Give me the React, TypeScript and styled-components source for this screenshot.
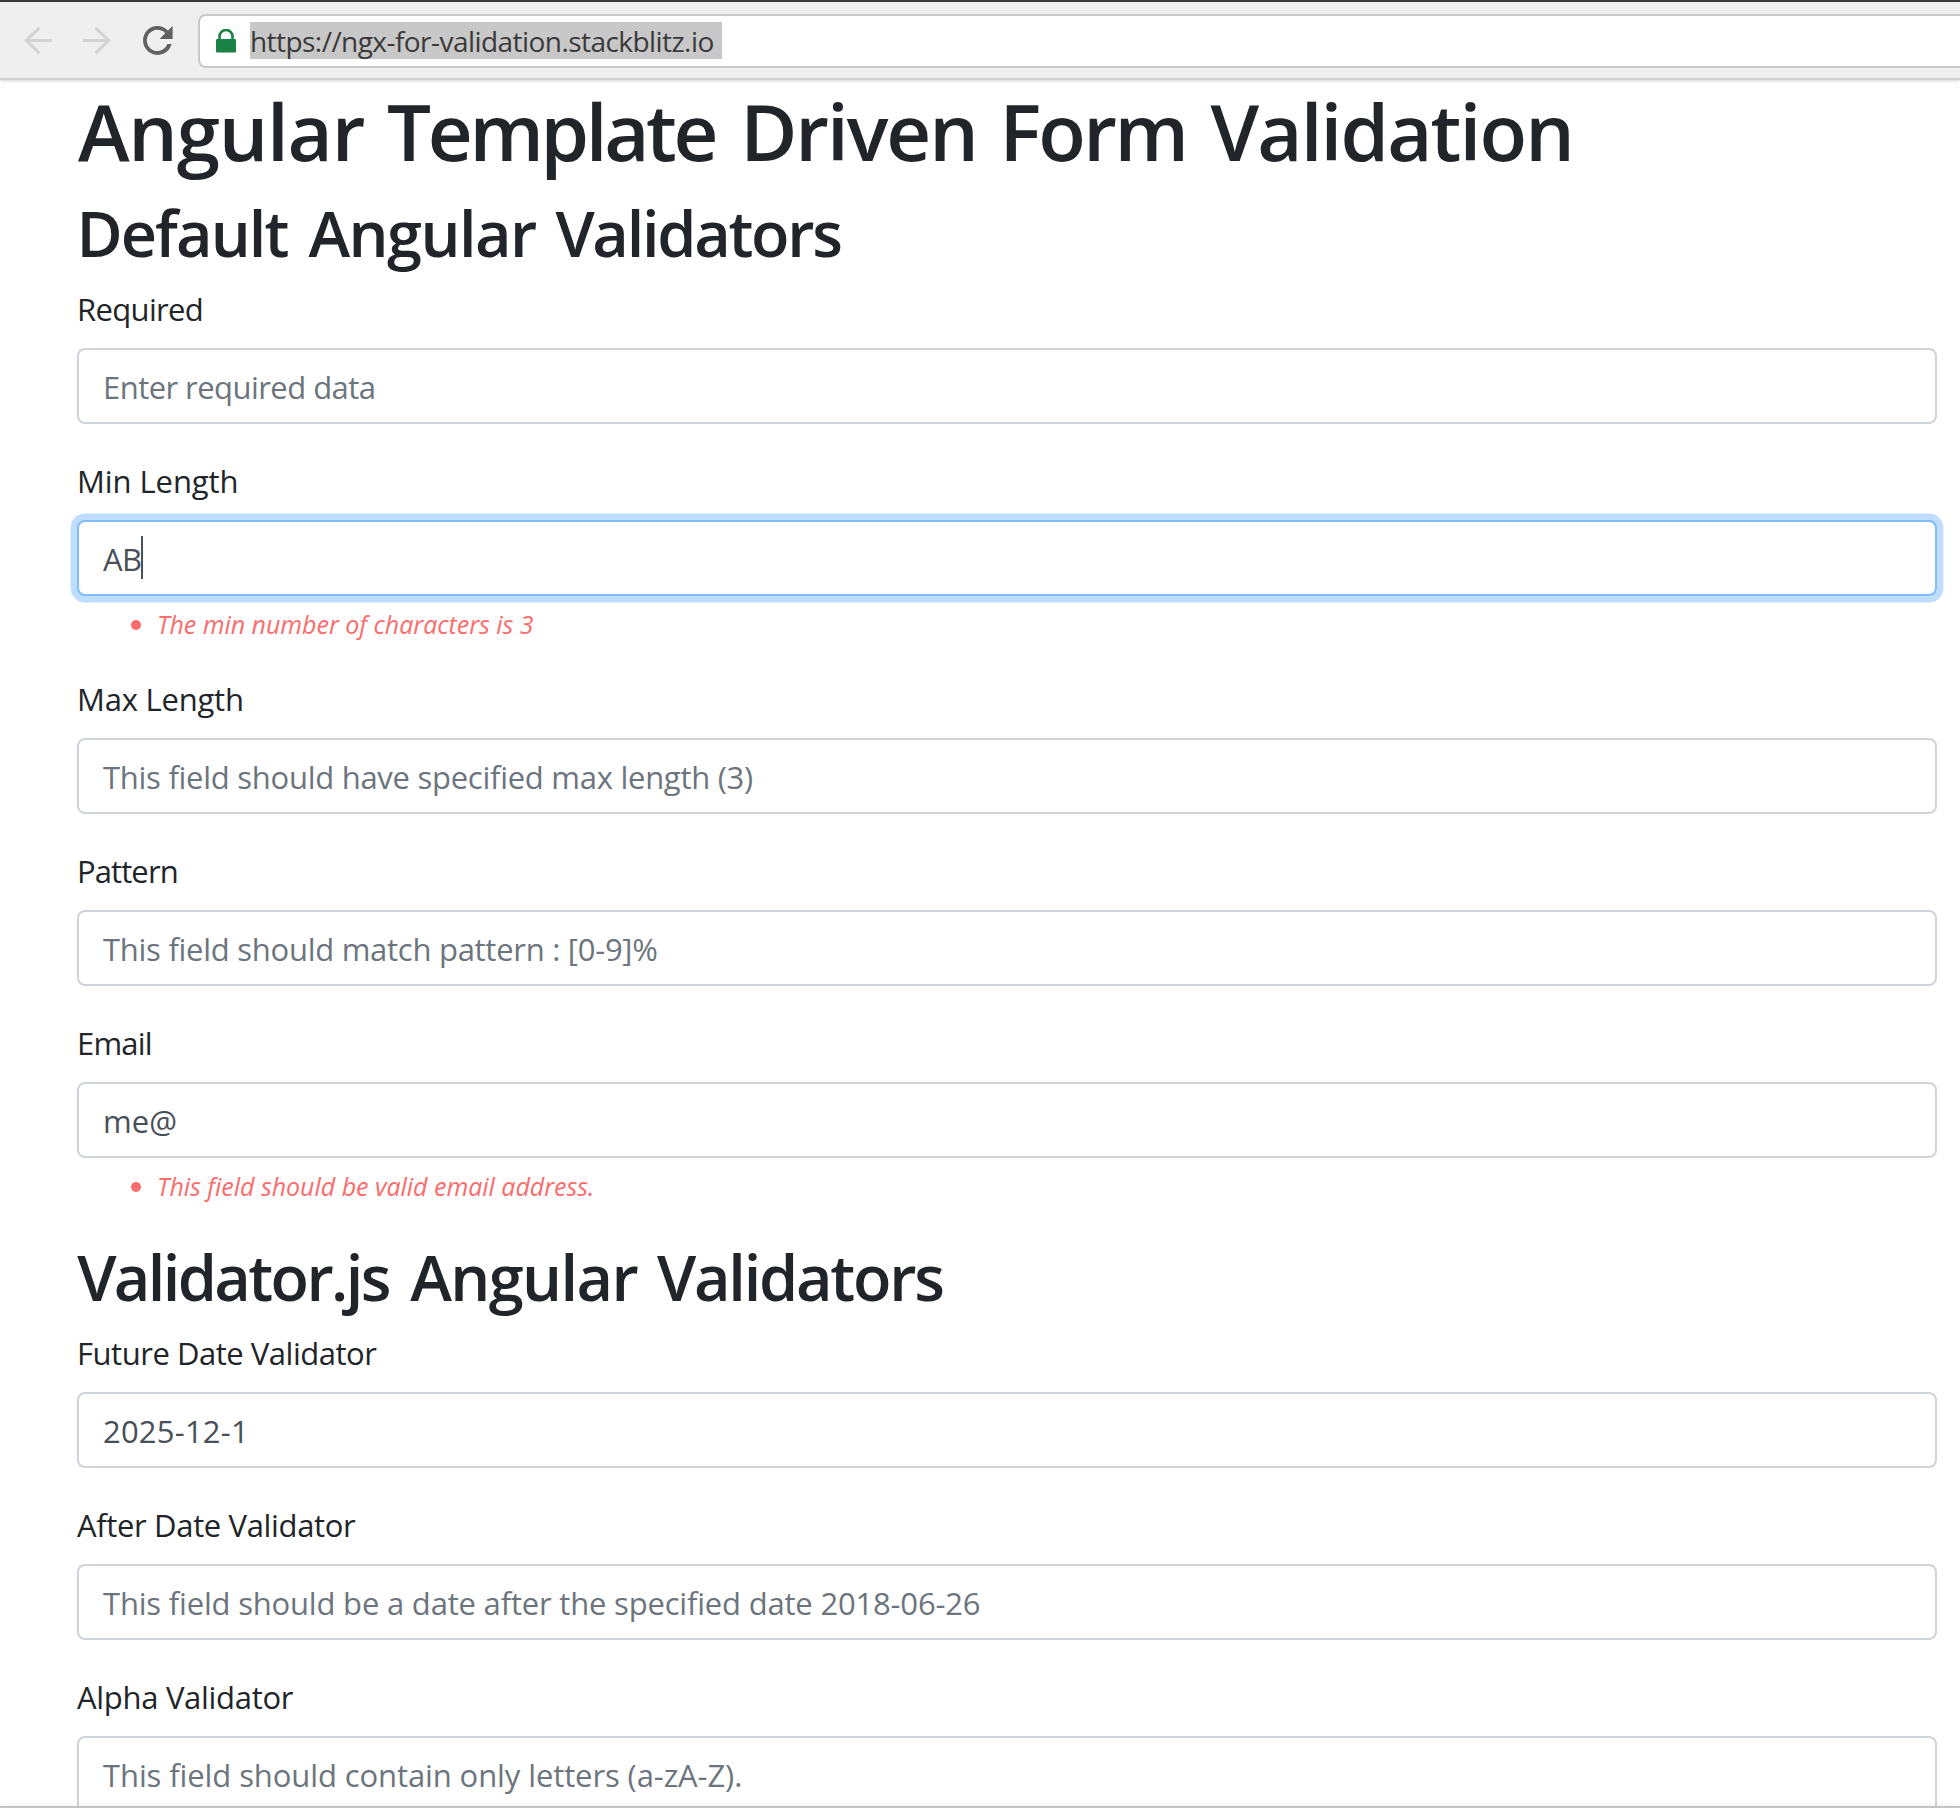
import React, { Fragment } from "react";
import styled, { createGlobalStyle } from "styled-components";

const GlobalStyle = createGlobalStyle`
  *, *::before, *::after { box-sizing: border-box; }
  html, body { margin: 0; background: #fff; overflow: hidden; }
  body { font-family: "Open Sans", "Noto Sans", sans-serif; color: #212529; }
`;

const Window = styled.div`
  display: flex;
  flex-direction: column;
  height: 1808px;
  overflow: hidden;
  background: #fff;
`;

const Toolbar = styled.header`
  position: relative;
  z-index: 1;
  flex: none;
  display: flex;
  align-items: center;
  height: 80px;
  padding: 0 0 0 20px;
  background: #efefef;
  border-top: 2px solid #3b3b3b;
  border-bottom: 2px solid #cfcfcf;
  box-shadow: 0 1px 3px rgba(0, 0, 0, 0.16);
`;

const ToolIcon = styled.svg<{ $gap: number }>`
  flex: none;
  display: block;
  margin-right: ${(p) => p.$gap}px;
`;

const AddressBar = styled.div`
  flex: 1;
  display: flex;
  align-items: center;
  height: 54px;
  padding-left: 16px;
  margin-top: 2px;
  background: #fff;
  border: 2px solid #c9c9c9;
  border-right: 0;
  border-radius: 8px 0 0 8px;
`;

const Url = styled.span`
  width: 472px;
  height: 37px;
  margin-top: -1px;
  background: #c8c8c8;
  color: #3a3a3a;
  font-size: 28px;
  line-height: 38px;
  letter-spacing: -0.55px;
  white-space: nowrap;
`;

const Page = styled.main`
  flex: 1;
  min-height: 0;
  overflow: hidden;
  padding: 0 23px 0 77px;
`;

const Title = styled.h1`
  height: 96px;
  margin: 0 0 16px;
  font-size: 78px;
  font-weight: 600;
  line-height: 103px;
  white-space: nowrap;
`;

const SectionTitle = styled.h2`
  height: 76px;
  margin: 0 0 16px;
  font-size: 63px;
  font-weight: 600;
  line-height: 81px;
  white-space: nowrap;
`;

const Word = styled.span<{ $tracking: number; $lead: number }>`
  margin-left: ${(p) => p.$lead}px;
  letter-spacing: ${(p) => p.$tracking}px;
`;

const Group = styled.div`
  margin-bottom: 32px;
`;

const Label = styled.label<{ $tracking: number }>`
  display: block;
  height: 48px;
  margin-bottom: 16px;
  font-size: 31px;
  line-height: 50px;
  letter-spacing: ${(p) => p.$tracking}px;
`;

const Control = styled.div<{ $focused?: boolean; $filled?: boolean; $tracking: number }>`
  display: flex;
  height: 76px;
  padding: 0 24px;
  background: #fff;
  border: 2px solid ${(p) => (p.$focused ? "#80bdff" : "#ced4da")};
  border-radius: 8px;
  box-shadow: ${(p) => (p.$focused ? "0 0 0 6.4px #bfdeff" : "none")};
  color: ${(p) => (p.$filled ? "#495057" : "#6c757d")};
  font-size: 31px;
  line-height: 74px;
  letter-spacing: ${(p) => p.$tracking}px;
  white-space: nowrap;
`;

const Caret = styled.span`
  width: 2px;
  height: 43px;
  margin-top: 14px;
  background: #495057;
`;

const Errors = styled.ul`
  height: 46px;
  margin: 0;
  padding: 9px 0 0 80px;
  list-style: none;
  color: #fb6c6c;
  font-size: 25px;
  font-style: italic;
  line-height: 39px;
  letter-spacing: -0.03px;
`;

const ErrorItem = styled.li`
  display: flex;
  align-items: center;
  &::before {
    content: "";
    width: 10px;
    height: 10px;
    margin: 0 16px 0 -26px;
    border-radius: 50%;
    background: #fb6c6c;
  }
`;

const BottomEdge = styled.footer`
  position: relative;
  flex: none;
  height: 2px;
  background: #c4c4c4;
  box-shadow: 0 -1px 4px rgba(0, 0, 0, 0.1);
`;

type HeadingWord = [text: string, tracking: number, lead: number];

const titleWords: HeadingWord[] = [
  ["Angular", -1.19, 0.9],
  ["Template", -3.33, 2.7],
  ["Driven", -2.03, 4.7],
  ["Form", -2.6, 2.4],
  ["Validation", -1.85, 4],
];

const defaultWords: HeadingWord[] = [
  ["Default", -1.88, -0.6],
  ["Angular", -1.52, 4.5],
  ["Validators", -2.28, 3.3],
];

const validatorJsWords: HeadingWord[] = [
  ["Validator.js", -2.6, 0.2],
  ["Angular", -1.57, 5],
  ["Validators", -2.21, 3.5],
];

function Words({ words }: { words: HeadingWord[] }) {
  return (
    <>
      {words.map(([text, tracking, lead], i) => (
        <Fragment key={i}>
          {i > 0 && " "}
          <Word $tracking={tracking} $lead={lead}>
            {text}
          </Word>
        </Fragment>
      ))}
    </>
  );
}

interface FieldProps {
  label: string;
  labelTracking: number;
  placeholder?: string;
  value?: string;
  tracking: number;
  focused?: boolean;
  error?: string;
}

function Field({ label, labelTracking, placeholder, value, tracking, focused, error }: FieldProps) {
  return (
    <Group>
      <Label $tracking={labelTracking}>{label}</Label>
      <Control $focused={focused} $filled={!!value} $tracking={tracking}>
        {value ?? placeholder}
        {focused && <Caret />}
      </Control>
      {error && (
        <Errors>
          <ErrorItem>{error}</ErrorItem>
        </Errors>
      )}
    </Group>
  );
}

const defaultFields: FieldProps[] = [
  { label: "Required", labelTracking: -0.65, placeholder: "Enter required data", tracking: -0.55 },
  {
    label: "Min Length",
    labelTracking: -0.08,
    value: "AB",
    tracking: -0.6,
    focused: true,
    error: "The min number of characters is 3",
  },
  {
    label: "Max Length",
    labelTracking: -0.22,
    placeholder: "This field should have specified max length (3)",
    tracking: -0.27,
  },
  {
    label: "Pattern",
    labelTracking: -0.9,
    placeholder: "This field should match pattern : [0-9]%",
    tracking: -0.27,
  },
  {
    label: "Email",
    labelTracking: -0.8,
    value: "me@",
    tracking: 0.1,
    error: "This field should be valid email address.",
  },
];

const validatorJsFields: FieldProps[] = [
  { label: "Future Date Validator", labelTracking: -0.47, value: "2025-12-1", tracking: 0.2 },
  {
    label: "After Date Validator",
    labelTracking: -0.35,
    placeholder: "This field should be a date after the specified date 2018-06-26",
    tracking: -0.19,
  },
  {
    label: "Alpha Validator",
    labelTracking: -0.3,
    placeholder: "This field should contain only letters (a-zA-Z).",
    tracking: -0.1,
  },
];

export default function App() {
  return (
    <Window>
      <GlobalStyle />
      <Toolbar>
        <ToolIcon $gap={27} width="36" height="32" viewBox="0 0 36 32" fill="none" stroke="#d3d3d3" strokeWidth="3">
          <path d="M32 16.5H6M19.5 3.8L6.2 16.5L19.5 29.2" />
        </ToolIcon>
        <ToolIcon $gap={21} width="36" height="32" viewBox="0 0 36 32" fill="none" stroke="#d3d3d3" strokeWidth="3">
          <path d="M0 16.5H26M12.5 3.8L25.8 16.5L12.5 29.2" />
        </ToolIcon>
        <ToolIcon $gap={22} width="36" height="32" viewBox="0 0 36 32">
          <path
            d="M28 6.4A14.5 14.5 0 1 0 31.6 20H27.4A10.6 10.6 0 1 1 25.2 9.2L19.6 14.9H32.6V2Z"
            fill="#616161"
          />
        </ToolIcon>
        <AddressBar>
          <ToolIcon $gap={14} width="20" height="24" viewBox="0 0 20 24">
            <path d="M3.5 11V7.5a6.5 6.5 0 0 1 13 0V11" fill="none" stroke="#198245" strokeWidth="2.6" />
            <rect x="0" y="10" width="20" height="13.5" rx="1.2" fill="#198245" />
          </ToolIcon>
          <Url>https://ngx-for-validation.stackblitz.io</Url>
        </AddressBar>
      </Toolbar>
      <Page>
        <Title>
          <Words words={titleWords} />
        </Title>
        <SectionTitle>
          <Words words={defaultWords} />
        </SectionTitle>
        {defaultFields.map((field) => (
          <Field key={field.label} {...field} />
        ))}
        <SectionTitle>
          <Words words={validatorJsWords} />
        </SectionTitle>
        {validatorJsFields.map((field) => (
          <Field key={field.label} {...field} />
        ))}
      </Page>
      <BottomEdge />
    </Window>
  );
}
